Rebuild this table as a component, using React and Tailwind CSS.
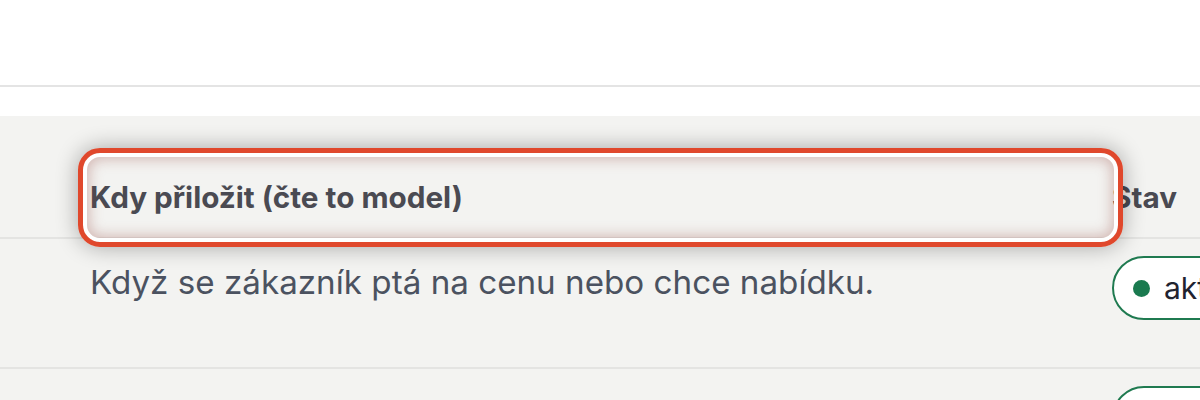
export default function App() {
  return (
    <div className="w-[1200px] h-[400px] overflow-hidden bg-white" style={{ fontFamily: "Inter, 'Noto Sans', sans-serif" }}>
      <div className="h-[87px] bg-white border-b-2 border-[#e4e4e4]" />
      <div className="h-[29px] bg-white" />
      <div className="bg-[#f3f3f1] h-[284px]">
        <div className="relative flex h-[123px] items-end pb-[22px] border-b-2 border-[#e4e4e2]">
          <div className="w-[1112px] shrink-0 pl-[90px] text-[29.7px] font-bold text-[#4a4a52] leading-[36px]">Kdy přiložit (čte to model)</div>
          <div className="shrink-0 text-[29.7px] font-bold text-[#4a4a52] leading-[36px]">Stav</div>
          <div className="absolute left-[78px] top-[32px] w-[1045px] h-[99px] rounded-[22px] border-[5px] border-[#e0482c] shadow-[0_0_22px_rgba(0,0,0,0.32),inset_0_0_0_4px_#ffffff,inset_0_0_14px_6px_rgba(150,70,60,0.35)]" />
        </div>
        <div className="flex h-[130px] border-b-2 border-[#e4e4e2]">
          <div className="w-[1112px] shrink-0 pl-[90px] pt-[23px] text-[33.2px] text-[#4b5260] leading-[40px]">Když se zákazník ptá na cenu nebo chce nabídku.</div>
          <div className="shrink-0 pt-[17px]">
            <div className="flex items-center h-[64px] pl-[19px] pr-[20px] rounded-full border-2 border-[#1f7a50] bg-white">
              <span className="w-[17px] h-[17px] rounded-full bg-[#1a7a4f] mr-[14px]" />
              <span className="text-[30px] text-[#1f2330]">aktivní</span>
            </div>
          </div>
        </div>
        <div className="flex">
          <div className="w-[1112px] shrink-0" />
          <div className="shrink-0 pt-[17px]">
            <div className="flex items-center h-[64px] pl-[19px] pr-[20px] rounded-full border-2 border-[#1f7a50] bg-white">
              <span className="w-[17px] h-[17px] rounded-full bg-[#1a7a4f] mr-[14px]" />
              <span className="text-[30px] text-[#1f2330]">aktivní</span>
            </div>
          </div>
        </div>
      </div>
    </div>
  );
}
